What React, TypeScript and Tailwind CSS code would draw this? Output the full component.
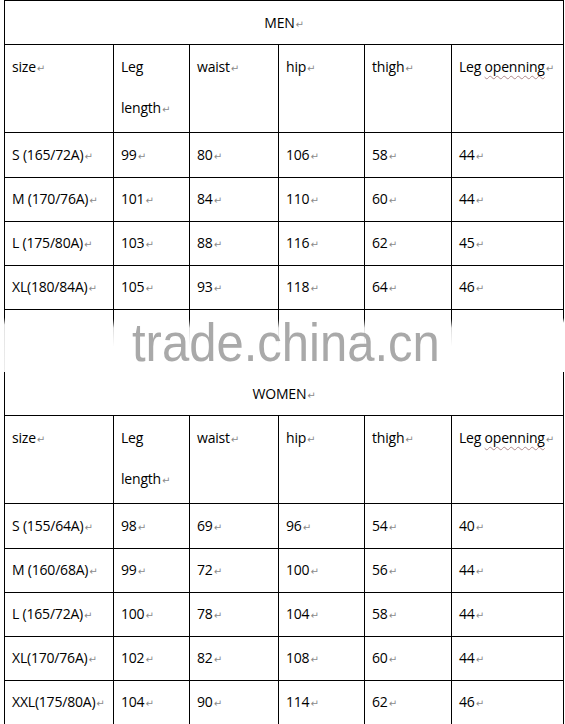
const COLS = "grid grid-cols-[109px_76px_89px_86px_87px_112px]"

const menRows = [
  ["S (165/72A)", "99", "80", "106", "58", "44"],
  ["M (170/76A)", "101", "84", "110", "60", "44"],
  ["L (175/80A)", "103", "88", "116", "62", "45"],
  ["XL(180/84A)", "105", "93", "118", "64", "46"],
]

const womenRows = [
  ["S (155/64A)", "98", "69", "96", "54", "40"],
  ["M (160/68A)", "99", "72", "100", "56", "44"],
  ["L (165/72A)", "100", "78", "104", "58", "44"],
  ["XL(170/76A)", "102", "82", "108", "60", "44"],
  ["XXL(175/80A)", "104", "90", "114", "62", "46"],
]

// Word's paragraph mark
function Mark() {
  return <span className="ml-px font-['DejaVu_Sans',sans-serif] text-[10px] font-normal text-[#8a8a8a]">↵</span>
}

function Cell({ children }: { children: React.ReactNode }) {
  return (
    <div className="border-r border-b border-black pl-[7px] pt-px leading-[41px] whitespace-nowrap">
      {children}
    </div>
  )
}

function SizeTable({ title, rows, top }: { title: string; rows: string[][]; top: boolean }) {
  return (
    <div className={`ml-1 w-[560px] border-l border-black ${top ? "border-t" : ""}`}>
      {/* Title row */}
      <div className="flex h-[44px] items-center justify-center border-r border-b border-black">
        <span>
          {title}
          <Mark />
        </span>
      </div>

      {/* Column headings */}
      <div className={`${COLS} h-[88px]`}>
        <Cell>
          size
          <Mark />
        </Cell>
        <Cell>
          Leg
          <br />
          length
          <Mark />
        </Cell>
        <Cell>
          waist
          <Mark />
        </Cell>
        <Cell>
          hip
          <Mark />
        </Cell>
        <Cell>
          thigh
          <Mark />
        </Cell>
        <Cell>
          Leg{" "}
          <span className="underline decoration-wavy decoration-[#b08a8a] decoration-1 underline-offset-[3px]">
            openning
          </span>
          <Mark />
        </Cell>
      </div>

      {rows.map((row) => (
        <div key={row[0]} className={`${COLS} h-[44px]`}>
          {row.map((v, i) => (
            <Cell key={i}>
              {v}
              <Mark />
            </Cell>
          ))}
        </div>
      ))}
    </div>
  )
}

const gapCols = ["w-[109px]", "w-[76px]", "w-[89px]", "w-[86px]", "w-[87px]", "w-[112px]"]

export default function App() {
  return (
    <div className="w-[565px] h-[724px] overflow-hidden bg-white font-['Open_Sans',sans-serif] text-[14px] font-medium tracking-[-0.2px] text-black">
      <SizeTable title="MEN" rows={menRows} top />

      {/* Watermark band between the two tables */}
      <div className="relative ml-1 flex h-[63px]">
        <div className="w-px bg-linear-to-b from-black from-[12%] via-[#e4e4e4] via-[25%] to-[#ececec]" />
        {gapCols.map((w, i) => (
          <div key={w} className={`${w} flex justify-end`}>
            <div
              className={`w-px ${
                i === gapCols.length - 1
                  ? "bg-linear-to-b from-black from-[14%] to-transparent to-[22%]"
                  : "bg-linear-to-b from-black from-[14%] via-[#dcdcdc] via-[30%] to-transparent to-[60%]"
              }`}
            />
          </div>
        ))}
        <span className="absolute left-[128px] top-[12px] origin-bottom scale-y-[1.1] font-['Liberation_Sans',Arial,sans-serif] text-[49px] font-normal leading-none tracking-normal text-[#a9a9a9]">
          trade.china.cn
        </span>
      </div>

      <SizeTable title="WOMEN" rows={womenRows} top={false} />
    </div>
  )
}
